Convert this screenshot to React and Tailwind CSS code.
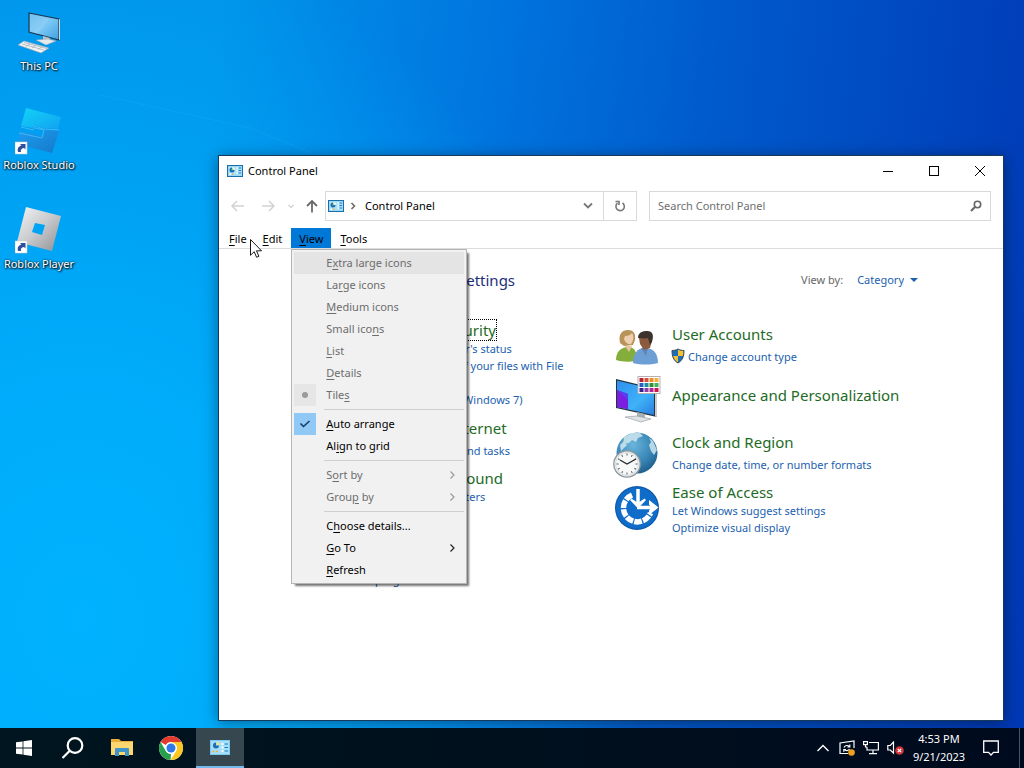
import { Fragment, useState } from 'react';

// "&" marks the access key letter, like in Win32 resource strings
function Mnemonic({ text }) {
  const i = text.indexOf('&');
  if (i < 0) return <>{text}</>;
  return (
    <>
      {text.slice(0, i)}
      <span className="underline underline-offset-2">{text[i + 1]}</span>
      {text.slice(i + 2)}
    </>
  );
}

/* ---------- icons ---------- */

function ControlPanelIcon({ className = 'w-4 h-3' }) {
  return (
    <svg viewBox="0 0 32 24" className={className} aria-hidden="true">
      <rect x="1" y="1" width="30" height="22" fill="#8fd3f7" stroke="#1b6fa8" strokeWidth="2" />
      <rect x="3" y="3" width="26" height="18" fill="#a9e0fb" />
      <path d="M10 5a5 5 0 1 0 5 5h-5z" fill="#1c6fb3" />
      <path d="M11 4a5 5 0 0 1 5 5h-5z" fill="#f4f9d8" />
      <path d="M8 10l3-4v5z" fill="#7ab648" />
      <rect x="5" y="17" width="3" height="3" fill="#fff" />
      <rect x="10" y="17" width="3" height="3" fill="#f0b23c" />
      <path d="M19 6h3M19 11h3M19 16h3" stroke="#fff" strokeWidth="3" />
      <path d="M23 6h5M23 11h5M23 16h5" stroke="#1c7fc4" strokeWidth="2" />
    </svg>
  );
}

function TaskbarPanelIcon() {
  return (
    <svg viewBox="0 0 20 15" className="w-5 h-[15px]" aria-hidden="true">
      <rect width="20" height="15" fill="#7cc9f3" />
      <rect x="1" y="1" width="18" height="13" fill="#a5dffb" />
      <path d="M6 2.500a3 3 0 1 0 3 3H6z" fill="#1d6fb5" />
      <path d="M6.500 2a3 3 0 0 1 3 3h-3z" fill="#f5e27a" />
      <path d="M2.500 11.500h2M6 11.500h2" stroke="#f0b23c" strokeWidth="1.600" />
      <path d="M11.500 4h2M11.500 7.500h2M11.500 11h2" stroke="#fff" strokeWidth="2" />
      <path d="M14.500 4H18M14.500 7.500H18M14.500 11H18" stroke="#1c7fc4" strokeWidth="1.200" />
    </svg>
  );
}

function ThisPcIcon() {
  return (
    <svg viewBox="0 0 48 48" className="w-12 h-12" aria-hidden="true">
      <defs>
        <linearGradient id="pcScreen" x1="0" y1="0" x2="1" y2="1">
          <stop offset="0" stopColor="#5db6ee" />
          <stop offset=".5" stopColor="#7cc8f5" />
          <stop offset="1" stopColor="#3e9fe0" />
        </linearGradient>
      </defs>
      <path d="M14 4l30 6v21l-30-8z" fill="url(#pcScreen)" stroke="#1c3a52" strokeWidth="1.2" />
      <path d="M44 10l1 .6v20l-1 .4z" fill="#cfd8dd" />
      <path d="M15 5l20 4-13 16-7-2z" fill="#fff" opacity=".13" />
      <path d="M28 27l7 2v4l-7-1z" fill="#b9c2c7" />
      <path d="M21 31l12-1 8 2-10 4z" fill="#e6eaec" stroke="#9aa5ac" strokeWidth=".5" />
      <path d="M3 36l6-4 25 7-8 5z" fill="#f1f3f4" stroke="#9aa5ac" strokeWidth=".6" />
      <path d="M7 35l22 6M9 33.500l23 6M11 37.700l4-3M17 39l4-3M23 40.500l4-3" stroke="#aab4ba" strokeWidth=".8" />
    </svg>
  );
}

function ShortcutArrow() {
  return (
    <g>
      <rect x="0" y="35" width="12" height="12" fill="#fff" stroke="#c5ccd2" strokeWidth=".6" />
      <path d="M3 45c-1-4 1-6 3.500-6.500L5 37h5.500v5.500L9 41c-3 .5-3.500 2-3 4z" fill="#2f4f9e" />
    </g>
  );
}

function RobloxStudioIcon() {
  return (
    <svg viewBox="0 0 48 50" className="w-12 h-[50px]" aria-hidden="true">
      <defs>
        <linearGradient id="rsTop" x1="0" y1="0" x2="1" y2="1">
          <stop offset="0" stopColor="#12d3f8" />
          <stop offset="1" stopColor="#12a2f0" />
        </linearGradient>
        <linearGradient id="rsBottom" x1="0" y1="0" x2="1" y2="1">
          <stop offset="0" stopColor="#1e9cf0" />
          <stop offset="1" stopColor="#1579c9" />
        </linearGradient>
      </defs>
      <path d="M11 1l35 9-3 12-15-1-8-3-2 3-12-2z" fill="url(#rsTop)" />
      <path d="M5 24l13 3 10 3 2-7 14 1-7 22-34-9z" fill="url(#rsBottom)" />
      <path d="M6 20l12 3 2-4 8 3 16 1M4 26l23 5 2-8-9-2" fill="none" stroke="#3fb6f3" strokeWidth="1" />
      <ShortcutArrow />
    </svg>
  );
}

function RobloxPlayerIcon() {
  return (
    <svg viewBox="0 0 48 50" className="w-12 h-[50px]" aria-hidden="true">
      <defs>
        <linearGradient id="rpBody" x1="0" y1="0" x2="1" y2="1">
          <stop offset="0" stopColor="#f4f4f5" />
          <stop offset=".5" stopColor="#c9cacd" />
          <stop offset="1" stopColor="#8d8f94" />
        </linearGradient>
      </defs>
      <path
        d="M11 1l35 9-9 35-35-9zM20 17l-3 9 10 3 3-10z"
        fill="url(#rpBody)"
        fillRule="evenodd"
      />
      <ShortcutArrow />
    </svg>
  );
}

function ShieldIcon() {
  return (
    <svg viewBox="0 0 16 16" className="w-4 h-4 shrink-0" aria-hidden="true">
      <path d="M8 1c2 1.200 4 1.500 6 1.500 0 6-1.500 10-6 12.500C3.500 12.500 2 8.500 2 2.500 4 2.500 6 2.200 8 1z" fill="#1d6cb8" stroke="#3b4754" strokeWidth="1" />
      <path d="M8 1.800c1.700 1 3.500 1.200 5.300 1.300 0 1.800-.1 3.400-.5 4.900H8z" fill="#f6c12e" />
      <path d="M8 8v6.200C5.200 12.600 3.800 10.500 3.200 8z" fill="#f6c12e" />
    </svg>
  );
}

function UsersIcon() {
  return (
    <svg viewBox="0 0 48 48" className="w-12 h-12" aria-hidden="true">
      <path d="M3 38c0-8 5-13 12-13 6 0 9 4 9 14-8 1-15 1-21-1z" fill="#83ae3c" />
      <path d="M12 24l4 6 3-6z" fill="#e9c3a2" />
      <path d="M7 21C5 12 9 8 15 8c5 0 8 3 7 10l-2 5-9 1z" fill="#b9945a" />
      <path d="M12 14c4 0 6-2 7-3 2 3 2 7-1 11-3 1-6-2-7-5z" fill="#f0cfb0" />
      <path d="M20 41c0-9 4-15 12-15 8 0 13 5 13 15-8 2-17 2-25 0z" fill="#6e9fd4" />
      <path d="M28 26h7l-2 8z" fill="#5c85b8" />
      <path d="M26 16c-1-4 4-6 8-6 5 0 6 4 5 8l-2 8-6 2-4-6z" fill="#8c5b3e" />
      <path d="M25 16c0-6 5-7 9-7 6 0 7 4 5 11l-2 3-2-7c-4 1-7 0-10 0z" fill="#3d332e" />
    </svg>
  );
}

function AppearanceIcon() {
  const swatches = ['#b3242e', '#d0563a', '#ee8b2b', '#f3b13a', '#2561c4', '#1d8ca5', '#3d8b2c', '#3fb55d', '#3a2188', '#8b3fa0', '#b3249a', '#c9174f'];
  return (
    <svg viewBox="0 0 48 48" className="w-12 h-12" aria-hidden="true">
      <defs>
        <linearGradient id="apScreen" x1="0" y1="0" x2="1" y2="1">
          <stop offset="0" stopColor="#2e8ff0" />
          <stop offset=".6" stopColor="#3fb2f8" />
          <stop offset="1" stopColor="#2a7de0" />
        </linearGradient>
      </defs>
      <path d="M3 3l41 10v28L3 32z" fill="#26323c" />
      <path d="M42 13l2 .4V41l-2-.5z" fill="#c8ced2" />
      <path d="M4 4.500l37 9V39L4 31z" fill="url(#apScreen)" />
      <path d="M4 14l11 4v15.300L4 31z" fill="#7a1fe0" />
      <path d="M4 14l11 4v6z" fill="#5a3df0" />
      <path d="M24 36l8 2v5h-8z" fill="#a9b1b6" />
      <path d="M12 41l12-1 14 3-10 3z" fill="#dfe3e5" stroke="#8d969c" strokeWidth=".6" />
      <rect x="25" y=".5" width="22" height="17" fill="#fff" stroke="#b5aeb4" strokeWidth="1" />
      {swatches.map((c, i) => (
        <rect key={c} x={26.5 + (i % 4) * 5} y={2 + Math.floor(i / 4) * 5} width="4" height="4" fill={c} />
      ))}
    </svg>
  );
}

function ClockRegionIcon() {
  const ticks = Array.from({ length: 12 }, (_, i) => i * 30);
  return (
    <svg viewBox="0 0 48 48" className="w-12 h-12" aria-hidden="true">
      <defs>
        <radialGradient id="globe" cx=".4" cy=".3" r=".8">
          <stop offset="0" stopColor="#6cb6dc" />
          <stop offset=".6" stopColor="#3584b5" />
          <stop offset="1" stopColor="#1b5480" />
        </radialGradient>
      </defs>
      <circle cx="24" cy="23" r="20.500" fill="url(#globe)" />
      <path d="M11 7l8-4 8 0 3 3-5 2-2 4-4-2-3 3-6 1zM36 8l4 3 4 9-3 5-3-4-2-6 2-3zM7 15l4-4 3 4-6 6z" fill="#cfe6ee" opacity=".85" />
      <circle cx="14" cy="34" r="13.200" fill="#eef0f1" stroke="#8f979d" strokeWidth="1.300" />
      <circle cx="14" cy="34" r="11.400" fill="#f7f8f8" stroke="#c3c9cd" strokeWidth=".6" />
      {ticks.map((a) => (
        <path key={a} d="M14 23.500v2" stroke="#555d63" strokeWidth="1" transform={`rotate(${a} 14 34)`} />
      ))}
      <path d="M7 30l7 4 9-5" fill="none" stroke="#22282c" strokeWidth="1.300" />
    </svg>
  );
}

function EaseIcon() {
  return (
    <svg viewBox="0 0 48 48" className="w-12 h-12" aria-hidden="true">
      <circle cx="24" cy="24" r="22" fill="#0c58a8" />
      <circle cx="24" cy="24" r="20.800" fill="#0f6cc8" />
      <path d="M19 11A14 14 0 1 0 37.500 29" fill="none" stroke="#fff" strokeWidth="5.500" strokeDasharray="7.500 1.200" />
      <path d="M25 5v16" stroke="#fff" strokeWidth="3.500" />
      <path d="M17 16l8 8.500 8-8.500-1.500-1.500L25 19l-6.500-4.500z" fill="#fff" />
      <path d="M24 23.500h17" stroke="#fff" strokeWidth="3.500" />
      <path d="M36 16l9.500 7.500L36 31v-4.500l2.500-3-2.500-3z" fill="#fff" />
    </svg>
  );
}

function SecurityIcon() {
  return (
    <svg viewBox="0 0 48 48" className="w-12 h-12" aria-hidden="true">
      <path d="M24 4c6 4 12 5 18 5 0 18-5 29-18 36C11 38 6 27 6 9c6 0 12-1 18-5z" fill="#1d6cb8" />
      <path d="M24 4c6 4 12 5 18 5l-1 15H24zM24 24v21C14 40 9 33 7 24z" fill="#f6c12e" />
    </svg>
  );
}

function GenericIcon() {
  return (
    <svg viewBox="0 0 48 48" className="w-12 h-12" aria-hidden="true">
      <rect x="6" y="10" width="36" height="26" fill="#6e9fd4" stroke="#26323c" />
      <path d="M18 40h12" stroke="#8d969c" strokeWidth="3" />
    </svg>
  );
}

function ChromeIcon() {
  return (
    <svg viewBox="0 0 24 24" className="w-6 h-6" aria-hidden="true">
      <circle cx="12" cy="12" r="12" fill="#fff" />
      <path d="M12 0a12 12 0 0 1 10.400 6H12a6 6 0 0 0-5.200 3L1.600 6A12 12 0 0 1 12 0z" fill="#e23b2e" />
      <path d="M1.600 6l5.200 9A6 6 0 0 0 12 18l-.5 6A12 12 0 0 1 1.600 6z" fill="#27a04b" />
      <path d="M22.400 6a12 12 0 0 1-10.900 18l5.700-9A6 6 0 0 0 17 9l-5-3z" fill="#fbc821" />
      <circle cx="12" cy="12" r="5.700" fill="#fff" />
      <circle cx="12" cy="12" r="4.500" fill="#2f78e8" />
    </svg>
  );
}

function FolderIcon() {
  return (
    <svg viewBox="0 0 22 20" className="w-[22px] h-5" aria-hidden="true">
      <path d="M0 1h8l2 2h12v14H0z" fill="#e9ae3a" />
      <path d="M0 4h22v13H0z" fill="#fcd771" />
      <path d="M4 18v-7a1 1 0 0 1 1-1h12a1 1 0 0 1 1 1v7h-4v-4H8v4z" fill="#3e96c8" />
    </svg>
  );
}

/* ---------- data ---------- */

const desktopIcons = [
  { name: 'This PC', Icon: ThisPcIcon },
  { name: 'Roblox Studio', Icon: RobloxStudioIcon },
  { name: 'Roblox Player', Icon: RobloxPlayerIcon },
];

const viewMenu = [
  [
    { label: 'E&xtra large icons', disabled: true, hot: true },
    { label: 'La&rge icons', disabled: true },
    { label: '&Medium icons', disabled: true },
    { label: 'Small ico&ns', disabled: true },
    { label: '&List', disabled: true },
    { label: '&Details', disabled: true },
    { label: 'Tile&s', disabled: true, mark: 'dot' },
  ],
  [{ label: '&Auto arrange', mark: 'check' }, { label: 'Al&ign to grid' }],
  [
    { label: 'S&ort by', disabled: true, sub: true },
    { label: 'Grou&p by', disabled: true, sub: true },
  ],
  [{ label: 'C&hoose details...' }, { label: '&Go To', sub: true }, { label: '&Refresh' }],
];

const leftCategories = [
  {
    title: 'System and Security',
    Icon: SecurityIcon,
    focused: true,
    tasks: ["Review your computer's status", 'Save backup copies of your files with File History', 'Backup and Restore (Windows 7)'],
  },
  { title: 'Network and Internet', Icon: GenericIcon, tasks: ['View network status and tasks'] },
  { title: 'Hardware and Sound', Icon: GenericIcon, tasks: ['View devices and printers', 'Add a device'] },
  { title: 'Programs', Icon: GenericIcon, tasks: ['Uninstall a program', 'Get programs'] },
];

const rightCategories = [
  { title: 'User Accounts', Icon: UsersIcon, tasks: ['Change account type'], shield: true },
  { title: 'Appearance and Personalization', Icon: AppearanceIcon, tasks: [] },
  { title: 'Clock and Region', Icon: ClockRegionIcon, tasks: ['Change date, time, or number formats'] },
  { title: 'Ease of Access', Icon: EaseIcon, tasks: ['Let Windows suggest settings', 'Optimize visual display'] },
];

/* ---------- window ---------- */

function ViewMenu() {
  return (
    <div role="menu" className="absolute left-0 top-full z-20 mt-px w-44 border border-[#b5b5b5] bg-[#f1f1f1] p-0.5 shadow-[3px_3px_2px_-1px_rgba(0,0,0,0.55)]">
      {viewMenu.map((group, g) => (
        <Fragment key={g}>
          {g > 0 && <div className="my-[3px] ml-[30px] h-px bg-[#d0d0d0]" />}
          {group.map((item) => (
            <button
              key={item.label}
              role="menuitem"
              disabled={item.disabled}
              className={`flex h-[22px] w-full items-center text-left ${item.hot ? 'bg-[#e4e4e4]' : ''} ${item.disabled ? 'text-[#6d6d6d]' : 'text-black'}`}
            >
              <span className={`flex h-[22px] w-[22px] items-center justify-center ${item.mark === 'check' ? 'bg-[#90c8f6]' : item.mark === 'dot' ? 'bg-[#e6e6e6]' : ''}`}>
                {item.mark === 'check' && (
                  <svg viewBox="0 0 12 12" className="h-3 w-3" fill="none" stroke="#123b63" strokeWidth="1.500">
                    <path d="M1.500 5.500l3 3L10.500 3" />
                  </svg>
                )}
                {item.mark === 'dot' && <span className="h-1.5 w-1.5 rounded-full bg-[#9a9a9a]" />}
              </span>
              <span className="ml-2.5 flex-1">
                <Mnemonic text={item.label} />
              </span>
              {item.sub && (
                <svg viewBox="0 0 8 10" className="mr-2 h-2.5 w-2" fill="none" stroke={item.disabled ? '#9a9a9a' : '#222'} strokeWidth="1.200">
                  <path d="M2.500 1.500L6 5 2.500 8.500" />
                </svg>
              )}
            </button>
          ))}
        </Fragment>
      ))}
    </div>
  );
}

function Category({ title, Icon, tasks, shield, focused, className = '' }) {
  return (
    <section className={`flex min-h-12 gap-[11px] ${className}`}>
      <div className="h-12 w-12 shrink-0 pt-0.5">
        <Icon />
      </div>
      <div className={`flex flex-col items-start justify-center ${tasks.length === 1 ? 'gap-1' : ''} ${tasks.length === 0 ? 'pb-1.5' : ''}`}>
        <a href="#" className={`text-[15px] leading-5 text-[#1e6b26] ${focused ? 'outline-1 outline-dotted outline-black' : ''}`}>
          {title}
        </a>
        {tasks.map((t) => (
          <a key={t} href="#" className={`flex items-center leading-[17px] text-[#1b5fae] ${shield ? '-ml-0.5' : ''}`}>
            {shield && <ShieldIcon />}
            <span className={shield ? 'ml-0.5' : ''}>{t}</span>
          </a>
        ))}
      </div>
    </section>
  );
}

function ControlPanelWindow() {
  const [viewOpen, setViewOpen] = useState(true);
  const [query, setQuery] = useState('');

  return (
    <div className="absolute bottom-[7px] left-[218px] right-5 top-[155px] flex flex-col border border-[#17395c] bg-white text-black shadow-[0_2px_14px_rgba(0,0,0,0.4)]">
      {/* title bar */}
      <header className="flex h-[30px] items-center pl-2">
        <ControlPanelIcon />
        <h1 className="ml-[5px] flex-1">Control Panel</h1>
        <button aria-label="Minimize" className="flex h-full w-[46px] items-center justify-center">
          <svg viewBox="0 0 10 10" className="h-2.5 w-2.5"><path d="M0 5.500h10" stroke="#000" /></svg>
        </button>
        <button aria-label="Maximize" className="flex h-full w-[46px] items-center justify-center">
          <svg viewBox="0 0 10 10" className="h-2.5 w-2.5"><rect x=".5" y=".5" width="9" height="9" fill="none" stroke="#000" /></svg>
        </button>
        <button aria-label="Close" className="flex h-full w-[46px] items-center justify-center">
          <svg viewBox="0 0 10 10" className="h-2.5 w-2.5"><path d="M0 0l10 10M10 0L0 10" stroke="#000" /></svg>
        </button>
      </header>

      {/* navigation row */}
      <div className="mt-[5px] flex h-[30px] items-center px-3">
        <button aria-label="Back" className="mr-4">
          <svg viewBox="0 0 14 12" className="h-3 w-3.5" fill="none" stroke="#d2d2d2" strokeWidth="1.500"><path d="M13 6H1M6 1L1 6l5 5" /></svg>
        </button>
        <button aria-label="Forward" className="mr-3">
          <svg viewBox="0 0 14 12" className="h-3 w-3.5" fill="none" stroke="#d2d2d2" strokeWidth="1.500"><path d="M1 6h12M8 1l5 5-5 5" /></svg>
        </button>
        <button aria-label="Recent locations" className="mr-[11px]">
          <svg viewBox="0 0 8 6" className="h-1.5 w-2" fill="none" stroke="#cfcfcf" strokeWidth="1.200"><path d="M1.500 2L4 4.500 6.500 2" /></svg>
        </button>
        <button aria-label="Up" className="mr-[7px]">
          <svg viewBox="0 0 12 14" className="h-3.5 w-3" fill="none" stroke="#6a6a6a" strokeWidth="1.800"><path d="M6 13.500V2M1 7l5-5 5 5" /></svg>
        </button>
        <div className="flex h-full flex-1 items-center border border-[#d9d9d9]">
          <span className="ml-0.5"><ControlPanelIcon /></span>
          <svg viewBox="0 0 6 8" className="ml-1.5 h-2 w-1.5" fill="none" stroke="#666" strokeWidth="1.500"><path d="M1.500 1l3 3-3 3" /></svg>
          <span className="ml-[9px] flex-1">Control Panel</span>
          <button aria-label="Previous locations" className="flex h-full w-[30px] items-center justify-center">
            <svg viewBox="0 0 10 8" className="h-2 w-2.5" fill="none" stroke="#777" strokeWidth="1.800"><path d="M1 1.500l4 4 4-4" /></svg>
          </button>
          <button aria-label="Refresh" className="flex h-full w-[33px] items-center justify-center border-l border-[#d9d9d9]">
            <svg viewBox="0 0 12 12" className="h-3 w-3" fill="none" stroke="#777" strokeWidth="1.600">
              <path d="M8.500 3a4.200 4.200 0 1 1-5 .200" />
              <path d="M1.500 1.500H5v3.500" />
            </svg>
          </button>
        </div>
        <div className="ml-3 flex h-full w-[342px] items-center border border-[#d9d9d9] px-2">
          <input
            type="text"
            aria-label="Search Control Panel"
            value={query}
            onChange={(e) => setQuery(e.target.value)}
            placeholder="Search Control Panel"
            className="min-w-0 flex-1 bg-transparent outline-none placeholder:text-[#6f6f6f]"
          />
          <svg viewBox="0 0 12 12" className="h-3 w-3" fill="none" stroke="#666" strokeWidth="1.600">
            <circle cx="7.500" cy="4.500" r="3.200" />
            <path d="M5.200 6.800L1 11" strokeWidth="2" />
          </svg>
        </div>
      </div>

      {/* menu bar */}
      <nav className="mt-[7px] flex h-[21px] items-stretch border-b border-[#dcdcdc] pl-0.5">
        <button className="px-2 pt-0.5"><Mnemonic text="&File" /></button>
        <button className="px-2 pt-0.5"><Mnemonic text="&Edit" /></button>
        <div className="relative ml-px flex">
          <button onClick={() => setViewOpen(!viewOpen)} className={`px-2 pt-0.5 ${viewOpen ? 'bg-[#0078d7]' : ''}`}>
            <Mnemonic text="&View" />
          </button>
          {viewOpen && <ViewMenu />}
        </div>
        <button className="ml-px px-2 pt-0.5"><Mnemonic text="&Tools" /></button>
      </nav>

      <main className="flex-1 overflow-hidden">
        <div className="mx-auto flex w-full max-w-[640px] items-center pr-[13px] pt-[19px]">
          <h2 className="flex-1 text-[15px] leading-6 text-[#1c2f7a]">Adjust your computer's settings</h2>
          <label htmlFor="view-by" className="mr-3.5 text-[#666]">View by:</label>
          <div className="flex items-center gap-1.5 text-[#1b5fae]">
            <select id="view-by" className="field-sizing-content appearance-none bg-transparent outline-none">
              <option>Category</option>
            </select>
            <svg viewBox="0 0 8 4" className="h-1 w-2" aria-hidden="true"><path d="M0 0h8L4 4z" fill="#1b5fae" /></svg>
          </div>
        </div>
        <div className="mx-auto grid w-full max-w-[632px] grid-cols-2 gap-x-1 pt-7">
          <div className="flex flex-col gap-1.5 pr-6">
            {leftCategories.map((c, i) => (
              <Category key={c.title} {...c} className={i === 2 ? 'pb-1.5' : ''} />
            ))}
          </div>
          <div className="flex flex-col gap-1.5">
            {rightCategories.map((c) => (
              <Category key={c.title} {...c} />
            ))}
          </div>
        </div>
      </main>
    </div>
  );
}

/* ---------- taskbar ---------- */

function Taskbar() {
  const btn = 'flex h-full w-12 items-center justify-center';
  return (
    <footer className="relative z-10 flex h-10 items-center bg-linear-to-r from-[#00151f] via-[#00101d] to-[#000a1e] text-white">
      <div className="flex h-full gap-px">
        <button aria-label="Start" className={btn}>
          <svg viewBox="0 0 16 16" className="h-4 w-4" fill="#fff">
            <path d="M0 2.300l6.600-.9v6.200H0zM7.400 1.300L16 0v7.600H7.400zM0 8.400h6.600v6.200L0 13.700zM7.400 8.400H16V16l-8.600-1.200z" />
          </svg>
        </button>
        <button aria-label="Search" className={btn}>
          <svg viewBox="0 0 22 22" className="h-[22px] w-[22px]" fill="none" stroke="#fff" strokeWidth="2.200">
            <circle cx="13" cy="8.500" r="7.300" />
            <path d="M7.800 13.700L.5 21" />
          </svg>
        </button>
        <button aria-label="File Explorer" className={btn}><FolderIcon /></button>
        <button aria-label="Google Chrome" className={btn}><ChromeIcon /></button>
        <button aria-label="Control Panel" className={`${btn} border-b-2 border-[#76b9ed] bg-[#37474f]`}>
          <TaskbarPanelIcon />
        </button>
      </div>
      <div className="ml-auto flex h-full items-center">
        <button aria-label="Show hidden icons" className="flex w-6 justify-center">
          <svg viewBox="0 0 12 8" className="h-2 w-3" fill="none" stroke="#fff" strokeWidth="1.400"><path d="M.5 7L6 1.500 11.500 7" /></svg>
        </button>
        <button aria-label="Windows Update" className="flex w-6 justify-center">
          <svg viewBox="0 0 16 16" className="h-4 w-4" fill="none" stroke="#fff" strokeWidth="1.200">
            <path d="M9 13.500H1V3l14-2v7" />
            <path d="M5 7.500c1-2.500 4-2.500 5.500-.8M10.800 4.500v2.500H8.500M10.500 9c-1 2-4 2-5 .5M4.800 11.800V9.500H7" />
            <circle cx="12.500" cy="12.500" r="3.300" fill="#f0a020" stroke="none" />
          </svg>
        </button>
        <button aria-label="Network" className="flex w-6 justify-center">
          <svg viewBox="0 0 16 14" className="h-3.5 w-4" fill="none" stroke="#fff" strokeWidth="1.200">
            <path d="M6 1.500h9.400v7.500H4V6M10 9v3.500M6 12.700h8" />
            <rect x=".6" y=".6" width="3.800" height="3" />
            <path d="M2.500 3.600V6H4" />
          </svg>
        </button>
        <button aria-label="Volume muted" className="flex w-6 justify-center">
          <svg viewBox="0 0 17 14" className="h-3.5 w-[17px]" fill="none" stroke="#fff" strokeWidth="1.200">
            <path d="M.8 4.500h2.500L6.500 1v11L3.300 9H.8z" />
            <circle cx="12.500" cy="9.500" r="4.300" fill="#d13438" stroke="none" />
            <path d="M10.800 7.800l3.400 3.400M14.200 7.800l-3.400 3.400" />
          </svg>
        </button>
        <div className="w-16 text-center leading-[18px]">
          <p>4:53 PM</p>
          <p>9/21/2023</p>
        </div>
        <button aria-label="Notifications" className="flex w-10 justify-center">
          <svg viewBox="0 0 16 16" className="h-4 w-4" fill="none" stroke="#fff" strokeWidth="1.300">
            <path d="M.7 1h14.600v11.300H10.500L8 15l-2.500-2.700H.7z" />
          </svg>
        </button>
        <div className="ml-2 h-full w-[5px] border-l border-[#4a5363]" />
      </div>
    </footer>
  );
}

export default function App() {
  return (
    <div className='flex min-h-screen flex-col font-["Noto_Sans","Open_Sans",sans-serif] text-[11px] leading-4 select-none'>
      <div className="relative flex-1 overflow-hidden bg-[radial-gradient(ellipse_55%_95%_at_8%_85%,#00b2ff_0%,#00b2ffcc_35%,#00b2ff00_100%),linear-gradient(96deg,#0094ea_0%,#0094ea_20%,#0074de_46%,#005acb_66%,#0046be_86%,#0038b4_100%)]">
        {/* light rays on the wallpaper */}
        <svg viewBox="0 0 220 60" className="absolute left-[100px] top-[95px] h-[60px] w-[220px]" fill="none" aria-hidden="true">
          <path d="M0 0L150 33 212 58" stroke="#4cc4ff" strokeWidth="1" opacity=".15" />
        </svg>

        <div className="absolute left-0 top-2 flex w-[78px] flex-col gap-[33px]">
          {desktopIcons.map(({ name, Icon }) => (
            <button key={name} className="flex flex-col items-center text-white">
              <span className="flex h-[50px] items-center"><Icon /></span>
              <span className="whitespace-nowrap [text-shadow:1px_1px_2px_#000,0_0_2px_#000]">{name}</span>
            </button>
          ))}
        </div>

        <ControlPanelWindow />

        {/* mouse pointer */}
        <svg viewBox="0 0 12 19" className="pointer-events-none absolute left-[250px] top-[239px] z-30 h-[19px] w-3" aria-hidden="true">
          <path d="M.5.500v15.800l3.700-3.600 2.400 5.600 2.300-1-2.400-5.500h5z" fill="#fff" stroke="#000" strokeWidth=".9" />
        </svg>
      </div>
      <Taskbar />
    </div>
  );
}
